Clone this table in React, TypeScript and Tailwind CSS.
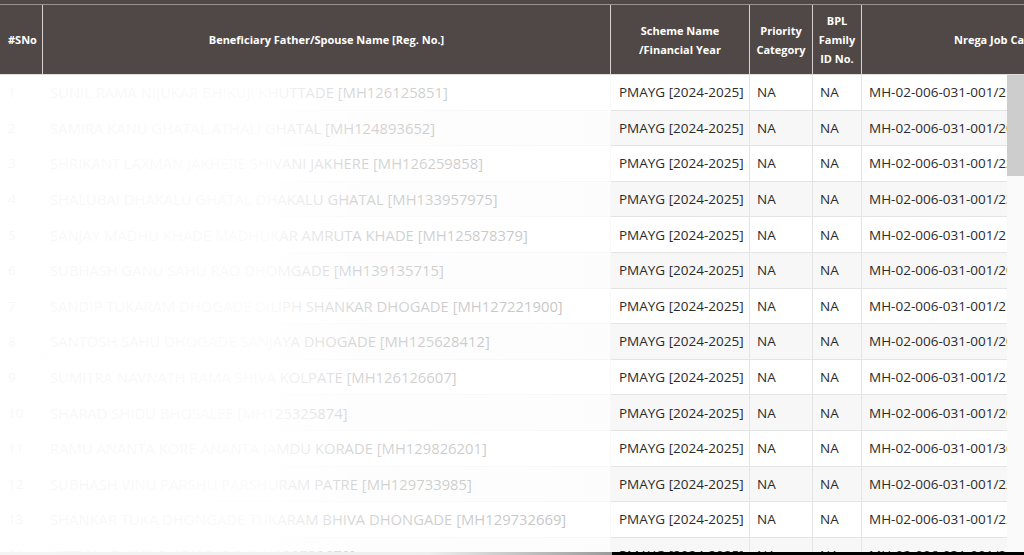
const rows = [
  { name: "SUNIL RAMA NIJUKAR BHIKUJI KHUTTADE [MH126125851]", card: "MH-02-006-031-001/2145" },
  { name: "SAMIRA KANU GHATAL ATHALI GHATAL [MH124893652]", card: "MH-02-006-031-001/2087" },
  { name: "SHRIKANT LAXMAN JAKHERE SHIVANI JAKHERE [MH126259858]", card: "MH-02-006-031-001/2203" },
  { name: "SHALUBAI DHAKALU GHATAL DHAKALU GHATAL [MH133957975]", card: "MH-02-006-031-001/2311" },
  { name: "SANJAY MADHU KHADE MADHUKAR AMRUTA KHADE [MH125878379]", card: "MH-02-006-031-001/2119" },
  { name: "SUBHASH GANU SAHU RAO DHOMGADE [MH139135715]", card: "MH-02-006-031-001/2064" },
  { name: "SANDIP TUKARAM DHOGADE DILIPH SHANKAR DHOGADE [MH127221900]", card: "MH-02-006-031-001/2176" },
  { name: "SANTOSH SAHU DHOGADE SANJAYA DHOGADE [MH125628412]", card: "MH-02-006-031-001/2058" },
  { name: "SUMITRA NAVNATH RAMA SHIVA KOLPATE [MH126126607]", card: "MH-02-006-031-001/2232" },
  { name: "SHARAD SHIDU BHOSALEE [MH125325874]", card: "MH-02-006-031-001/2091" },
  { name: "RAMU ANANTA KORE ANANTA JAMDU KORADE [MH129826201]", card: "MH-02-006-031-001/3012" },
  { name: "SUBHASH VINU PARSHU PARSHURAM PATRE [MH129733985]", card: "MH-02-006-031-001/2264" },
  { name: "SHANKAR TUKA DHONGADE TUKARAM BHIVA DHONGADE [MH129732669]", card: "MH-02-006-031-001/2287" },
  { name: "VITTHAL BHIVA DHONGADE [MH129732670]", card: "MH-02-006-031-001/2288" },
];

function App() {
  return (
    <div className="h-screen w-full bg-white overflow-hidden flex flex-col font-['Open_Sans',sans-serif]">
      {/* top edge of the previous row */}
      <div className="h-[5px] shrink-0 bg-[#504846] border-b border-[#9a9290]" />

      {/* header */}
      <div className="h-[70px] shrink-0 flex bg-[#504846] text-white font-bold text-[11px] leading-[19px] border-b border-[#e2dedd] overflow-hidden">
        <div className="w-[43px] shrink-0 flex items-center pl-2 border-r border-[#d6d1cf]">#SNo</div>
        <div className="w-[568px] shrink-0 flex items-center justify-center border-r border-[#d6d1cf]">
          Beneficiary Father/Spouse Name [Reg. No.]
        </div>
        <div className="w-[139px] shrink-0 flex items-center justify-center text-center border-r border-[#d6d1cf]">
          Scheme Name<br />/Financial Year
        </div>
        <div className="w-[63px] shrink-0 flex items-center justify-center text-center border-r border-[#d6d1cf]">
          Priority<br />Category
        </div>
        <div className="w-[49px] shrink-0 flex items-center justify-center text-center border-r border-[#d6d1cf]">
          BPL<br />Family<br />ID No.
        </div>
        <div className="w-[266px] shrink-0 flex items-center justify-center">Nrega Job Card</div>
      </div>

      {/* body */}
      <div className="flex-1 flex min-h-0">
        <div className="relative w-[1007px] shrink-0 overflow-hidden">
          {rows.map((r, i) => (
            <div
              key={i}
              className={
                "h-[35.6px] flex items-center border-b border-[#e4e4e4] text-[13.5px] text-[#2b2b2b] whitespace-nowrap " +
                (i % 2 === 1 ? "bg-[#f7f7f7]" : "bg-white")
              }
            >
              <div className="w-[43px] shrink-0 h-full flex items-center pl-2 border-r border-[#e4e4e4]">{i + 1}</div>
              <div className="w-[568px] shrink-0 h-full flex items-center pl-[7px] text-[14.8px] border-r border-[#e4e4e4] overflow-hidden">
                {r.name}
              </div>
              <div className="w-[139px] shrink-0 h-full flex items-center pl-2 border-r border-[#e4e4e4]">
                PMAYG [2024-2025]
              </div>
              <div className="w-[63px] shrink-0 h-full flex items-center pl-[7px] border-r border-[#e4e4e4]">NA</div>
              <div className="w-[49px] shrink-0 h-full flex items-center pl-[7px] border-r border-[#e4e4e4]">NA</div>
              <div className="w-[266px] shrink-0 h-full flex items-center pl-[7px]">{r.card}</div>
            </div>
          ))}
          {/* faded-out names */}
          <div className="absolute left-0 top-0 bottom-0 w-[611px] bg-[linear-gradient(90deg,rgba(255,255,255,0.96)_0%,rgba(255,255,255,0.975)_44%,rgba(255,255,255,0.8)_58%,rgba(255,255,255,0.7)_100%)]" />
        </div>
        {/* scrollbar */}
        <div className="flex-1 bg-[#fafafa] flex flex-col">
          <div className="h-[101px] bg-[#cdcdcd]" />
        </div>
      </div>

      {/* bottom edge */}
      <div className="h-[3px] shrink-0 flex">
        <div className="w-[612px] bg-[linear-gradient(90deg,#f4f4f4_0%,#eeeeee_70%,#9a9a9a_100%)]" />
        <div className="flex-1 bg-black" />
      </div>
    </div>
  );
}

export default App;
